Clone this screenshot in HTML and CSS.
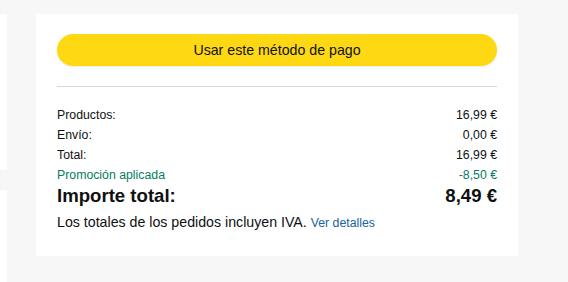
FILE: index.html
```html
<!DOCTYPE html>
<html lang="es">
<head>
<meta charset="utf-8">
<link rel="stylesheet" href="styles.css">
</head>
<body>
<div class="page">
  <div class="side">
    <div class="side-box top"></div>
    <div class="side-box bottom"></div>
  </div>
  <div class="card">
    <button class="pay-btn">Usar este método de pago</button>
    <hr class="divider">
    <div class="rows">
      <div class="row"><span>Productos:</span><span>16,99 €</span></div>
      <div class="row"><span>Envío:</span><span>0,00 €</span></div>
      <div class="row"><span>Total:</span><span>16,99 €</span></div>
      <div class="row promo"><span>Promoción aplicada</span><span>-8,50 €</span></div>
      <div class="row grand"><span>Importe total:</span><span>8,49 €</span></div>
    </div>
    <p class="note">Los totales de los pedidos incluyen IVA. <a class="link" href="#">Ver detalles</a></p>
  </div>
</div>
</body>
</html>
```
FILE: styles.css
```css
html, body {
  margin: 0;
  padding: 0;
  background: #f7f7f7;
  font-family: "Liberation Sans", Arial, sans-serif;
  color: #0f1111;
}
.page {
  display: flex;
  align-items: flex-start;
  height: 282px;
  overflow: hidden;
}
.side {
  width: 7px;
  display: flex;
  flex-direction: column;
  gap: 20px;
  padding-top: 14px;
}
.side-box {
  background: #fff;
}
.side-box.top { height: 156px; }
.side-box.bottom { height: 120px; }
.card {
  margin-left: 29px;
  margin-top: 14px;
  width: 440px;
  background: #fff;
  padding: 20px 21px 23px 21px;
}
.pay-btn {
  display: block;
  width: 100%;
  height: 32px;
  border: none;
  border-radius: 16px;
  background: #ffd814;
  color: #0f1111;
  font-family: inherit;
  font-size: 14.2px;
  padding: 0;
  box-shadow: 0 1px 2px rgba(213, 217, 217, 0.5);
}
.divider {
  border: none;
  border-top: 1px solid #d5d9d9;
  margin: 20px 0 18px 0;
}
.rows {
  display: flex;
  flex-direction: column;
}
.row {
  display: flex;
  justify-content: space-between;
  font-size: 12.3px;
  line-height: 20px;
}
.row.promo { color: #067d62; }
.row.grand {
  font-size: 18.6px;
  font-weight: bold;
  line-height: 22px;
}
.note {
  margin: 5px 0 0 0;
  font-size: 14.2px;
  line-height: 20px;
}
.link {
  color: #2162a1;
  font-size: 12.3px;
  text-decoration: none;
}
```
